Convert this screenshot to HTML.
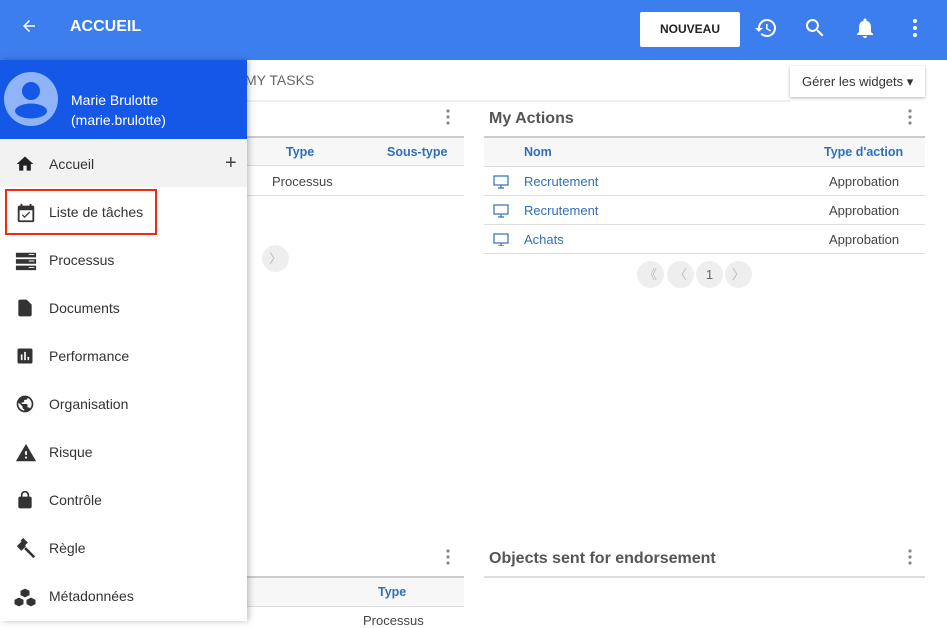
<!DOCTYPE html>
<html><head><meta charset="utf-8"><style>
*{box-sizing:border-box;margin:0;padding:0}
body{width:947px;height:621px;overflow:hidden;font-family:"Liberation Sans",Arial,sans-serif;background:#fff;position:relative;color:#333}
.abs{position:absolute}
.top{left:0;top:0;width:947px;height:60px;background:#3d7eef}
.th{font-size:12.5px;font-weight:bold;color:#2f6fba}
.td{font-size:13px;color:#444}
.line{height:1px;background:#ddd}
.pg{width:27px;height:27px;border-radius:50%;background:#eee;color:#bbb;font-size:13px;text-align:center;line-height:27px}
.drawer{left:0;top:60px;width:247px;height:561px;background:#fff;box-shadow:2px 0 6px rgba(0,0,0,.25)}
.item{position:absolute;left:0;width:247px;height:48px}
.item span{position:absolute;left:49px;top:17px;font-size:14px;color:#333}
.item svg{position:absolute;left:15px;top:15px}
</style></head><body>
<div class="abs top">
 <svg class="abs" style="left:20px;top:17px" width="18" height="18" viewBox="0 0 24 24"><path d="M20 11H7.8l5.6-5.6L12 4l-8 8 8 8 1.4-1.4L7.8 13H20z" fill="#fff"/></svg>
 <div class="abs" style="left:70px;top:18px;color:#fff;font-weight:bold;font-size:16px">ACCUEIL</div>
 <div class="abs" style="left:640px;top:12px;width:100px;height:35px;background:#fff;border-radius:2px;font-weight:bold;font-size:12px;text-align:center;line-height:35px;color:#222">NOUVEAU</div>
 <svg class="abs" style="left:754px;top:16px" width="24" height="24" viewBox="0 0 24 24"><path d="M13 3a9 9 0 0 0-9 9H1l3.9 3.9L9 12H6a7 7 0 1 1 2.05 4.95l-1.42 1.42A9 9 0 1 0 13 3zm-1 5v5l4.28 2.54.72-1.21-3.5-2.08V8z" fill="#fff"/></svg>
 <svg class="abs" style="left:803px;top:16px" width="24" height="24" viewBox="0 0 24 24"><path d="M15.5 14h-.8l-.3-.3A6.5 6.5 0 1 0 9.5 16a6.5 6.5 0 0 0 4.2-1.6l.3.3v.8l5 5 1.5-1.5-5-5zm-6 0a4.5 4.5 0 1 1 0-9 4.5 4.5 0 0 1 0 9z" fill="#fff"/></svg>
 <svg class="abs" style="left:853px;top:16px" width="24" height="24" viewBox="0 0 24 24"><path d="M12 22a2 2 0 0 0 2-2h-4a2 2 0 0 0 2 2zm6-6v-5c0-3.1-1.6-5.6-4.5-6.3V4a1.5 1.5 0 0 0-3 0v.7C7.6 5.4 6 7.9 6 11v5l-2 2v1h16v-1z" fill="#fff"/></svg>
 <svg class="abs" style="left:903px;top:16px" width="24" height="24" viewBox="0 0 24 24"><circle cx="12" cy="5" r="2" fill="#fff"/><circle cx="12" cy="12" r="2" fill="#fff"/><circle cx="12" cy="19" r="2" fill="#fff"/></svg>
</div>
<div class="abs" style="left:245px;top:72px;font-size:14px;color:#666">MY TASKS</div>
<div class="abs" style="left:0;top:100px;width:790px;height:2px;background:#eee"></div>
<div class="abs" style="left:790px;top:66px;width:135px;height:31px;background:#fff;box-shadow:0 1px 3px rgba(0,0,0,.3);font-size:13px;line-height:31px;padding-left:12px;color:#333">Gérer les widgets ▾</div>
<svg class="abs" style="left:446px;top:109px" width="4" height="16"><circle cx="2" cy="2" r="1.6" fill="#888"/><circle cx="2" cy="8" r="1.6" fill="#888"/><circle cx="2" cy="14" r="1.6" fill="#888"/></svg>
<div class="abs" style="left:247px;top:136px;width:217px;height:30px;background:#f7f7f7;border-top:2px solid #ccc;border-bottom:1px solid #ddd"></div>
<div class="abs th" style="left:286px;top:145px">Type</div>
<div class="abs th" style="left:387px;top:145px">Sous-type</div>
<div class="abs td" style="left:272px;top:174px">Processus</div>
<div class="abs line" style="left:247px;top:195px;width:217px"></div>
<div class="abs pg" style="left:262px;top:245px">〉</div>
<div class="abs" style="left:489px;top:110px;font-size:16px;font-weight:bold;color:#555">My Actions</div>
<svg class="abs" style="left:908px;top:109px" width="4" height="16"><circle cx="2" cy="2" r="1.6" fill="#888"/><circle cx="2" cy="8" r="1.6" fill="#888"/><circle cx="2" cy="14" r="1.6" fill="#888"/></svg>
<div class="abs" style="left:484px;top:136px;width:441px;height:31px;background:#f7f7f7;border-top:2px solid #ccc;border-bottom:1px solid #ddd"></div>
<div class="abs th" style="left:524px;top:145px">Nom</div>
<div class="abs th" style="left:824px;top:145px">Type d'action</div>
<div class="abs td" style="left:524px;top:174px;color:#2f6fba">Recrutement</div>
<div class="abs td" style="left:829px;top:174px">Approbation</div>
<div class="abs line" style="left:484px;top:195px;width:441px"></div>
<div class="abs td" style="left:524px;top:203px;color:#2f6fba">Recrutement</div>
<div class="abs td" style="left:829px;top:203px">Approbation</div>
<div class="abs line" style="left:484px;top:224px;width:441px"></div>
<div class="abs td" style="left:524px;top:232px;color:#2f6fba">Achats</div>
<div class="abs td" style="left:829px;top:232px">Approbation</div>
<div class="abs line" style="left:484px;top:253px;width:441px"></div>
<svg class="abs" style="left:493px;top:174px" width="16" height="72" viewBox="0 0 16 72"><g fill="none" stroke="#2f6fba" stroke-width="1.2"><rect x="1" y="2" width="14" height="9"/><path d="M5 14h6M8 11v3"/><rect x="1" y="31" width="14" height="9"/><path d="M5 43h6M8 40v3"/><rect x="1" y="60" width="14" height="9"/><path d="M5 72h6M8 69v3"/></g></svg>
<div class="abs pg" style="left:637px;top:261px">《</div>
<div class="abs pg" style="left:667px;top:261px">〈</div>
<div class="abs pg" style="left:696px;top:261px;color:#666">1</div>
<div class="abs pg" style="left:725px;top:261px">〉</div>
<svg class="abs" style="left:446px;top:549px" width="4" height="16"><circle cx="2" cy="2" r="1.6" fill="#888"/><circle cx="2" cy="8" r="1.6" fill="#888"/><circle cx="2" cy="14" r="1.6" fill="#888"/></svg>
<div class="abs" style="left:247px;top:576px;width:217px;height:31px;background:#f7f7f7;border-top:2px solid #ccc;border-bottom:1px solid #ddd"></div>
<div class="abs th" style="left:378px;top:585px">Type</div>
<div class="abs td" style="left:363px;top:613px">Processus</div>
<div class="abs" style="left:489px;top:550px;font-size:16px;font-weight:bold;color:#555">Objects sent for endorsement</div>
<svg class="abs" style="left:908px;top:549px" width="4" height="16"><circle cx="2" cy="2" r="1.6" fill="#888"/><circle cx="2" cy="8" r="1.6" fill="#888"/><circle cx="2" cy="14" r="1.6" fill="#888"/></svg>
<div class="abs" style="left:484px;top:576px;width:441px;height:2px;background:#ddd"></div>
<div class="abs drawer">
 <div class="abs" style="left:0;top:0;width:247px;height:79px;background:#1558e8">
  <svg class="abs" style="left:4px;top:12px" width="54" height="54" viewBox="0 0 54 54"><circle cx="27" cy="27" r="27" fill="#8fb4f7"/><circle cx="27" cy="19" r="9" fill="#1558e8"/><ellipse cx="27" cy="39" rx="16" ry="7.5" fill="#1558e8"/></svg>
  <div class="abs" style="left:71px;top:30px;color:#fff;font-size:14px;line-height:20px">Marie Brulotte<br>(marie.brulotte)</div>
 </div>
 <div class="item" style="top:79px;background:#f2f2f2"><svg width="20" height="20" viewBox="0 0 24 24"><path d="M10 20v-6h4v6h5v-8h3L12 3 2 12h3v8z" fill="#222"/></svg><span>Accueil</span><div class="abs" style="left:225px;top:13px;font-size:20px;color:#444">+</div></div>
 <div class="item" style="top:127px"><svg width="22" height="22" viewBox="0 0 24 24"><path d="M19 4h-1V2h-2v2H8V2H6v2H5a2 2 0 0 0-2 2v14a2 2 0 0 0 2 2h14a2 2 0 0 0 2-2V6a2 2 0 0 0-2-2zm0 16H5V9h14zM10.5 17.5l-3-3 1-1 2 2 5-5 1 1z" fill="#333"/></svg><span>Liste de tâches</span></div>
 <div class="abs" style="left:5px;top:129px;width:152px;height:46px;border:2px solid #f02a10"></div>
 <div class="item" style="top:175px"><svg width="22" height="22" viewBox="0 0 24 24"><path d="M1 3h22v5H1zM1 10h22v5H1zM1 17h22v5H1z" fill="#333"/><path d="M15 5h6M15 12h6M15 19h6" stroke="#fff" stroke-width="1"/></svg><span>Processus</span></div>
 <div class="item" style="top:223px"><svg width="20" height="20" viewBox="0 0 24 24"><path d="M6 2a2 2 0 0 0-2 2v16a2 2 0 0 0 2 2h12a2 2 0 0 0 2-2V8l-6-6z" fill="#333"/></svg><span>Documents</span></div>
 <div class="item" style="top:271px"><svg width="20" height="20" viewBox="0 0 24 24"><path d="M19 3H5a2 2 0 0 0-2 2v14a2 2 0 0 0 2 2h14a2 2 0 0 0 2-2V5a2 2 0 0 0-2-2zM9 17H7v-7h2zm4 0h-2V7h2zm4 0h-2v-4h2z" fill="#333"/></svg><span>Performance</span></div>
 <div class="item" style="top:319px"><svg width="20" height="20" viewBox="0 0 24 24"><path d="M12 2a10 10 0 1 0 0 20 10 10 0 0 0 0-20zm-1 17.9A8 8 0 0 1 4.2 10.2L9 15v1a2 2 0 0 0 2 2zm6.9-2.5A2 2 0 0 0 16 16h-1v-3a1 1 0 0 0-1-1H8v-2h2a1 1 0 0 0 1-1V7h2a2 2 0 0 0 2-2v-.4a8 8 0 0 1 2.9 12.8z" fill="#333"/></svg><span>Organisation</span></div>
 <div class="item" style="top:367px"><svg width="22" height="22" viewBox="0 0 24 24"><path d="M1 21h22L12 2zm12-3h-2v-2h2zm0-4h-2v-4h2z" fill="#333"/></svg><span>Risque</span></div>
 <div class="item" style="top:415px"><svg width="20" height="20" viewBox="0 0 24 24"><path d="M18 8h-1V6A5 5 0 0 0 7 6v2H6a2 2 0 0 0-2 2v10a2 2 0 0 0 2 2h12a2 2 0 0 0 2-2V10a2 2 0 0 0-2-2zM9 6a3 3 0 0 1 6 0v2H9z" fill="#333"/></svg><span>Contrôle</span></div>
 <div class="item" style="top:463px"><svg width="22" height="22" viewBox="0 0 24 24"><path d="M2 9l5-5 5 5-5 5zM6 3l3-3 5 5-3 3zM10 12l2-2 10 10-2 2z" fill="#333"/></svg><span>Règle</span></div>
 <div class="item" style="top:511px"><svg width="26" height="24" viewBox="0 0 26 24" style="left:12px"><g fill="#333" stroke="#fff" stroke-width="1"><path d="M13 2l5 2.5v5L13 12l-5-2.5v-5z"/><path d="M7 11l5 2.5v5L7 21l-5-2.5v-5z"/><path d="M19 11l5 2.5v5L19 21l-5-2.5v-5z"/></g></svg><span>Métadonnées</span></div>
</div>
</body></html>
